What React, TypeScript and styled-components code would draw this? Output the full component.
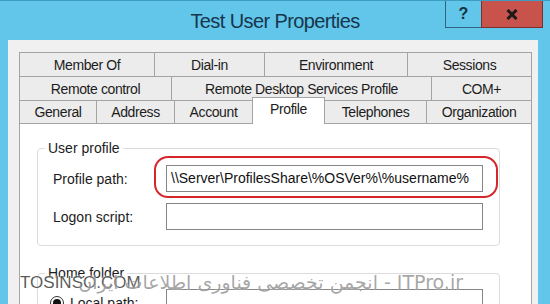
import React from "react";
import styled, { createGlobalStyle } from "styled-components";

const frameBlue = "#62c5ea";
const uiFont = `"Liberation Sans", Arial, sans-serif`;
const tabLine = "#a4a4a4";

const GlobalStyle = createGlobalStyle`
  html, body {
    margin: 0;
    padding: 0;
    overflow: hidden;
  }
  body {
    font-family: ${uiFont};
  }
`;

// WINDOW FRAME //
const Window = styled.div`
  position: relative;
  width: 550px;
  height: 304px;
  box-sizing: border-box;
  display: flex;
  flex-direction: column;
  overflow: hidden;
  background: ${frameBlue};
  border-top: 1px solid #3d9cc4;
`;

const TitleBar = styled.div`
  flex: none;
  height: 39px;
  display: grid;
  grid-template-columns: 1fr auto 1fr;
`;

const Title = styled.div`
  grid-column: 2;
  align-self: center;
  padding-top: 2px;
  font-size: 20px;
  letter-spacing: -0.6px;
  color: #17364a;
`;

const CaptionButtons = styled.div`
  grid-column: 3;
  justify-self: end;
  align-self: start;
  display: flex;
  margin: -1px 7px 0 0;
`;

const CaptionButton = styled.div<{ $close?: boolean }>`
  width: ${(p) => (p.$close ? 62 : 37)}px;
  height: 28px;
  box-sizing: border-box;
  display: flex;
  align-items: center;
  justify-content: center;
  margin-left: ${(p) => (p.$close ? -1 : 0)}px;
  background: ${(p) => (p.$close ? "#c8524c" : frameBlue)};
  border: 1px solid ${(p) => (p.$close ? "#7c302c" : "#2f6482")};
  font-weight: bold;
  font-size: 16px;
  color: #16303f;
`;

const Client = styled.div`
  flex: 1;
  min-height: 0;
  overflow: hidden;
  margin: 0 12px 0 8px;
  padding: 12px 6px 0 11px;
  background: #f0f0f0;
`;

// TABS //
const TabRow = styled.div<{ $h: number }>`
  display: flex;
  align-items: flex-end;
  height: ${(p) => p.$h}px;
`;

const Tab = styled.div<{ $w?: number; $active?: boolean }>`
  flex: ${(p) => (p.$w ? `0 0 ${p.$w}px` : "1")};
  height: ${(p) => (p.$active ? "27px" : "100%")};
  margin-bottom: ${(p) => (p.$active ? -1 : 0)}px;
  position: ${(p) => (p.$active ? "relative" : "static")};
  z-index: ${(p) => (p.$active ? 2 : "auto")};
  box-sizing: border-box;
  display: flex;
  align-items: center;
  justify-content: center;
  padding-bottom: ${(p) => (p.$active ? 4 : 0)}px;
  background: ${(p) => (p.$active ? "#ffffff" : "#ececec")};
  border: 1px solid ${tabLine};
  border-bottom: none;
  font-size: 14px;
  letter-spacing: -0.4px;
  color: #1c1c1c;
  white-space: nowrap;

  & + & {
    margin-left: -1px;
  }
`;

const Panel = styled.div`
  height: 220px;
  box-sizing: border-box;
  padding: 15px 0 0 17px;
  background: #ffffff;
  border: 1px solid ${tabLine};
`;

// GROUP BOXES //
const GroupBox = styled.fieldset`
  width: 463px;
  box-sizing: border-box;
  margin: 0;
  padding: 0;
  border: 1px solid #dcdcdc;
  border-radius: 4px;

  & + & {
    margin-top: 18px;
  }
`;

const GroupTitle = styled.legend`
  margin-left: 7px;
  padding: 0 3px;
  font-size: 14px;
  line-height: 18px;
  color: #1c1c1c;
`;

const FieldGrid = styled.div<{ $top: number }>`
  display: grid;
  grid-template-columns: 113px 317px;
  row-gap: 11px;
  align-items: center;
  padding: ${(p) => p.$top}px 0 15px 15px;
`;

const Label = styled.div`
  display: flex;
  align-items: center;
  gap: 6px;
  font-size: 14px;
  color: #1c1c1c;
`;

const Field = styled.div`
  height: 27px;
  box-sizing: border-box;
  padding: 0 4px;
  border: 1px solid #858585;
  background: #ffffff;
  font-size: 14px;
  line-height: 25px;
  color: #111111;
  white-space: nowrap;
  overflow: hidden;
`;

const Ring = styled.div`
  position: relative;

  &::after {
    content: "";
    position: absolute;
    inset: -9px -15px -6px -12px;
    border: 2.5px solid #d4262b;
    border-radius: 14px;
    pointer-events: none;
  }
`;

const Radio = styled.span`
  width: 14px;
  height: 14px;
  margin-left: -3px;
  box-sizing: border-box;
  border: 1px solid #333333;
  border-radius: 50%;
  display: flex;
  align-items: center;
  justify-content: center;

  &::after {
    content: "";
    width: 8px;
    height: 8px;
    border-radius: 50%;
    background: #111111;
  }
`;

// WATERMARK //
const SiteMark = styled.div`
  position: absolute;
  left: 20px;
  top: 272px;
  font-size: 17px;
  color: rgba(60, 60, 60, 0.85);
  text-shadow: 0 0 2px #ffffff, 0 0 1px #ffffff;
`;

const SloganMark = styled.div`
  position: absolute;
  left: 88px;
  top: 270px;
  width: 375px;
  direction: rtl;
  text-align: right;
  font-family: "DejaVu Sans", sans-serif;
  font-size: 19px;
  color: rgba(80, 80, 80, 0.5);
  text-shadow: 0 0 2px rgba(255, 255, 255, 0.9);
  white-space: nowrap;
`;

const App: React.FunctionComponent = () => {
  return (
    <>
      <GlobalStyle />
      <Window>
        <TitleBar>
          <Title>Test User Properties</Title>
          <CaptionButtons>
            <CaptionButton>?</CaptionButton>
            <CaptionButton $close>
              <svg width="12" height="11" viewBox="0 0 12 11">
                <path d="M1.5 1 L10.5 10 M10.5 1 L1.5 10" stroke="#1a1a1a" strokeWidth="3" />
              </svg>
            </CaptionButton>
          </CaptionButtons>
        </TitleBar>
        <Client>
          <TabRow $h={24}>
            <Tab $w={136}>Member Of</Tab>
            <Tab $w={111}>Dial-in</Tab>
            <Tab $w={144}>Environment</Tab>
            <Tab>Sessions</Tab>
          </TabRow>
          <TabRow $h={24}>
            <Tab $w={153}>Remote control</Tab>
            <Tab $w={261}>Remote Desktop Services Profile</Tab>
            <Tab>COM+</Tab>
          </TabRow>
          <TabRow $h={23}>
            <Tab $w={78}>General</Tab>
            <Tab $w={79}>Address</Tab>
            <Tab $w={79}>Account</Tab>
            <Tab $w={73} $active>
              Profile
            </Tab>
            <Tab $w={103}>Telephones</Tab>
            <Tab>Organization</Tab>
          </TabRow>
          <Panel>
            <GroupBox>
              <GroupTitle>User profile</GroupTitle>
              <FieldGrid $top={8}>
                <Label>Profile path:</Label>
                <Ring>
                  <Field>\\Server\ProfilesShare\%OSVer%\%username%</Field>
                </Ring>
                <Label>Logon script:</Label>
                <Field />
              </FieldGrid>
            </GroupBox>
            <GroupBox>
              <GroupTitle>Home folder</GroupTitle>
              <FieldGrid $top={7}>
                <Label>
                  <Radio />
                  Local path:
                </Label>
                <Field />
              </FieldGrid>
            </GroupBox>
          </Panel>
        </Client>
        <SiteMark>TOSINSO.COM</SiteMark>
        <SloganMark>ITPro.ir - انجمن تخصصی فناوری اطلاعات ایران</SloganMark>
      </Window>
    </>
  );
};

export default App;
